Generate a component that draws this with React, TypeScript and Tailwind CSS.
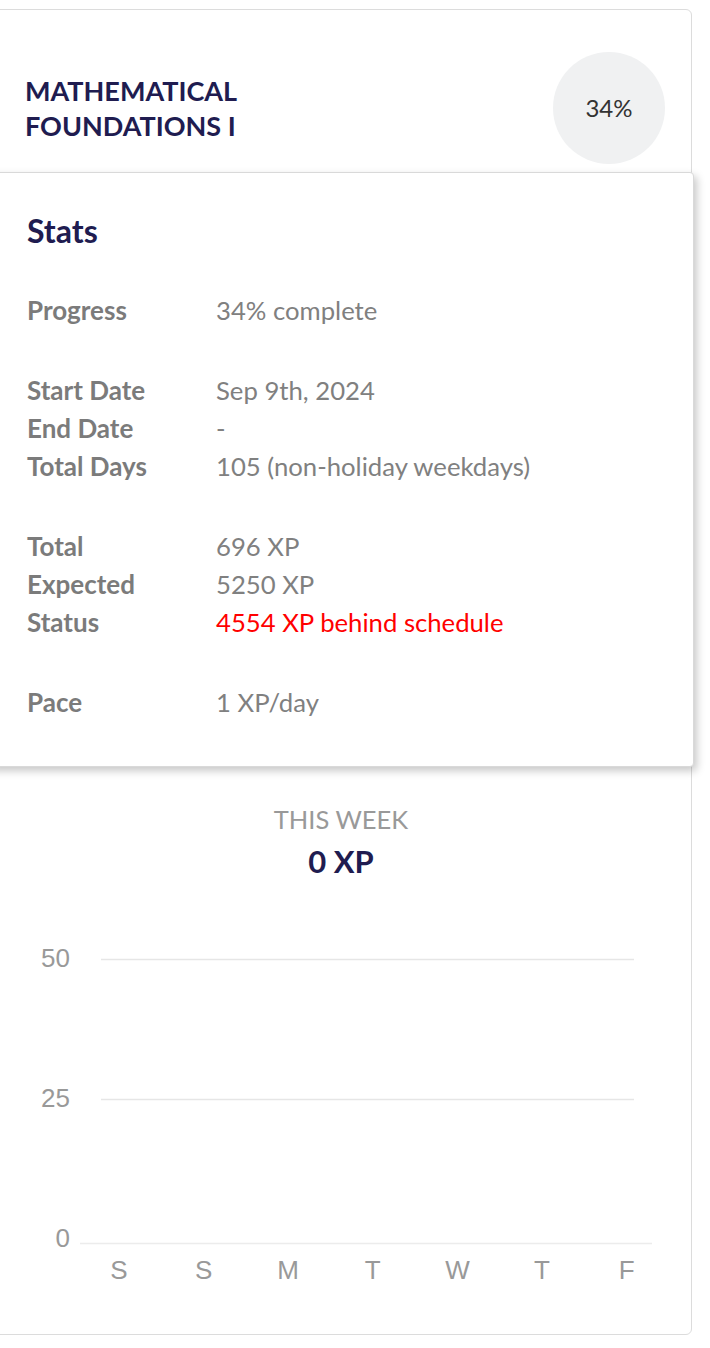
const stats: { label: string; value: string; red?: boolean }[][] = [
  [{ label: "Progress", value: "34% complete" }],
  [
    { label: "Start Date", value: "Sep 9th, 2024" },
    { label: "End Date", value: "-" },
    { label: "Total Days", value: "105 (non-holiday weekdays)" },
  ],
  [
    { label: "Total", value: "696 XP" },
    { label: "Expected", value: "5250 XP" },
    { label: "Status", value: "4554 XP behind schedule", red: true },
  ],
  [{ label: "Pace", value: "1 XP/day" }],
]

const days = ["S", "S", "M", "T", "W", "T", "F"]

function WeekChart() {
  return (
    <svg width={692} height={370} className="block ml-[9px]" style={{ fontFamily: "'Liberation Sans', Arial, sans-serif" }}>
      <line x1={101} x2={634} y1={29.5} y2={29.5} stroke="#e6e6e6" strokeWidth={1.5} />
      <line x1={101} x2={634} y1={169.5} y2={169.5} stroke="#e6e6e6" strokeWidth={1.5} />
      <line x1={80} x2={652} y1={313.5} y2={313.5} stroke="#ececec" strokeWidth={1.5} />
      <text x={70} y={37} textAnchor="end" fontSize={26} fill="#999">50</text>
      <text x={70} y={177} textAnchor="end" fontSize={26} fill="#999">25</text>
      <text x={70} y={317} textAnchor="end" fontSize={26} fill="#999">0</text>
      {days.map((d, i) => (
        <text key={i} x={119 + i * 84.6} y={349} textAnchor="middle" fontSize={26} fill="#999">
          {d}
        </text>
      ))}
    </svg>
  )
}

export default function App() {
  return (
    <div className="min-h-screen bg-white pt-[9px] font-['Lato',sans-serif]">
      <div className="relative ml-[-10px] w-[702px] h-[1326px] rounded-[6px] border border-[#dcdcdc] bg-white">
        <div className="flex items-center justify-between pt-[42px] pl-[34px] pr-[26px]">
          <h1 className="text-[27px] leading-[35px] font-bold text-[#201c50] uppercase">
            Mathematical
            <br />
            Foundations I
          </h1>
          <div className="flex h-[112px] w-[112px] items-center justify-center rounded-full bg-[#f0f1f2] text-[24px] text-[#333]">
            34%
          </div>
        </div>

        <div className="absolute left-[-3px] top-[162px] z-10 w-[706px] rounded-[4px] border border-[#d9d9d9] bg-white pt-[38px] pb-[45px] pl-[38px] shadow-[3px_4px_8px_rgba(0,0,0,0.22)]">
          <h2 className="text-[32px] leading-[40px] font-bold text-[#201c50]">Stats</h2>
          <div className="mt-[40px] flex flex-col gap-[42px]">
            {stats.map((group, gi) => (
              <div key={gi} className="flex flex-col">
                {group.map((row) => (
                  <div key={row.label} className="flex leading-[38px]">
                    <span className="w-[189px] text-[26px] font-bold text-[#7b7b7b]">{row.label}</span>
                    <span className={`text-[25.7px] ${row.red ? "text-[#ff0000]" : "text-[#808080]"}`}>{row.value}</span>
                  </div>
                ))}
              </div>
            ))}
          </div>
        </div>

        <div className="mt-[640px] flex flex-col items-center">
          <div className="text-[25.5px] leading-[30px] text-[#999] uppercase">This week</div>
          <div className="mt-[12px] text-[31px] leading-[30px] font-bold text-[#201c50]">0 XP</div>
        </div>

        <div className="mt-[54px]">
          <WeekChart />
        </div>
      </div>
    </div>
  )
}
